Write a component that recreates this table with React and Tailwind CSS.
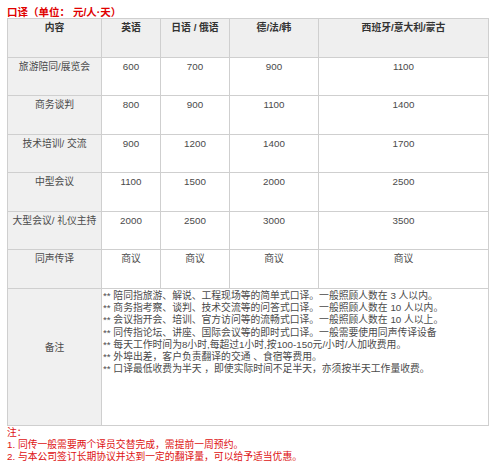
import React from "react";

const rows = [
  ["旅游陪同/展览会", "600", "700", "900", "1100"],
  ["商务谈判", "800", "900", "1100", "1400"],
  ["技术培训/ 交流", "900", "1200", "1400", "1700"],
  ["中型会议", "1100", "1500", "2000", "2500"],
  ["大型会议/ 礼仪主持", "2000", "2500", "3000", "3500"],
  ["同声传译", "商议", "商议", "商议", "商议"],
];

const heights = ["h-[38px]", "h-[39px]", "h-[38px]", "h-[39px]", "h-[38px]", "h-[39px]"];

const notes = [
  "** 陪同指旅游、解说、工程现场等的简单式口译。一般照顾人数在 3 人以内。",
  "** 商务指考察、谈判、技术交流等的问答式口译。一般照顾人数在 10 人以内。",
  "** 会议指开会、培训、官方访问等的流畅式口译。一般照顾人数在 10 人以上。",
  "** 同传指论坛、讲座、国际会议等的即时式口译。一般需要使用同声传译设备",
  "** 每天工作时间为8小时,每超过1小时,按100-150元/小时/人加收费用。",
  "** 外埠出差，客户负责翻译的交通 、食宿等费用。",
  "** 口译最低收费为半天 ，即使实际时间不足半天，亦须按半天工作量收费。",
];

export default function App() {
  return (
    <div
      className="w-[500px] h-[462px] bg-white pl-[7px] pt-[6px] text-[9.8px] leading-[12px] text-[#4a4a4a]"
      style={{ fontFamily: '"Liberation Sans", "Noto Sans CJK SC", sans-serif' }}
    >
      <div className="text-[#e00000] font-bold text-[10.5px] leading-[12px] h-[12px]">
        口译（单位： 元/人·天）
      </div>
      <table className="table-fixed border-collapse w-[481px] border border-[#bdbdbd]">
        <colgroup>
          <col className="w-[94px]" />
          <col className="w-[59px]" />
          <col className="w-[69px]" />
          <col className="w-[89px]" />
          <col className="w-[170px]" />
        </colgroup>
        <thead>
          <tr className="h-[39px] bg-[#efefef]">
            {["内容", "英语", "日语 / 俄语", "德/法/韩", "西班牙/意大利/蒙古"].map((h) => (
              <th
                key={h}
                className="border border-[#cfcfcf] align-top text-center font-bold text-[#333] pt-[3px] p-0"
              >
                {h}
              </th>
            ))}
          </tr>
        </thead>
        <tbody>
          {rows.map((r, i) => (
            <tr key={i} className={heights[i]}>
              {r.map((c, j) => (
                <td
                  key={j}
                  className={
                    "border border-[#cfcfcf] align-top text-center pt-[3px] p-0 whitespace-nowrap " +
                    (j === 0 ? "bg-[#f0f0f0]" : "bg-white")
                  }
                >
                  {c}
                </td>
              ))}
            </tr>
          ))}
          <tr className="h-[137px]">
            <td className="border border-[#cfcfcf] bg-[#f0f0f0] text-center align-top pt-[53px] p-0">
              备注
            </td>
            <td colSpan={4} className="border border-[#cfcfcf] align-top p-0 pt-[1px] pl-[1px]">
              {notes.map((n, i) => (
                <div key={i} className="whitespace-nowrap leading-[12.2px]">
                  {n}
                </div>
              ))}
            </td>
          </tr>
        </tbody>
      </table>
      <div className="text-[#dd1111] pt-[1px] leading-[12px]">
        <div>注：</div>
        <div>1. 同传一般需要两个译员交替完成，需提前一周预约。</div>
        <div>2. 与本公司签订长期协议并达到一定的翻译量，可以给予适当优惠。</div>
      </div>
    </div>
  );
}
